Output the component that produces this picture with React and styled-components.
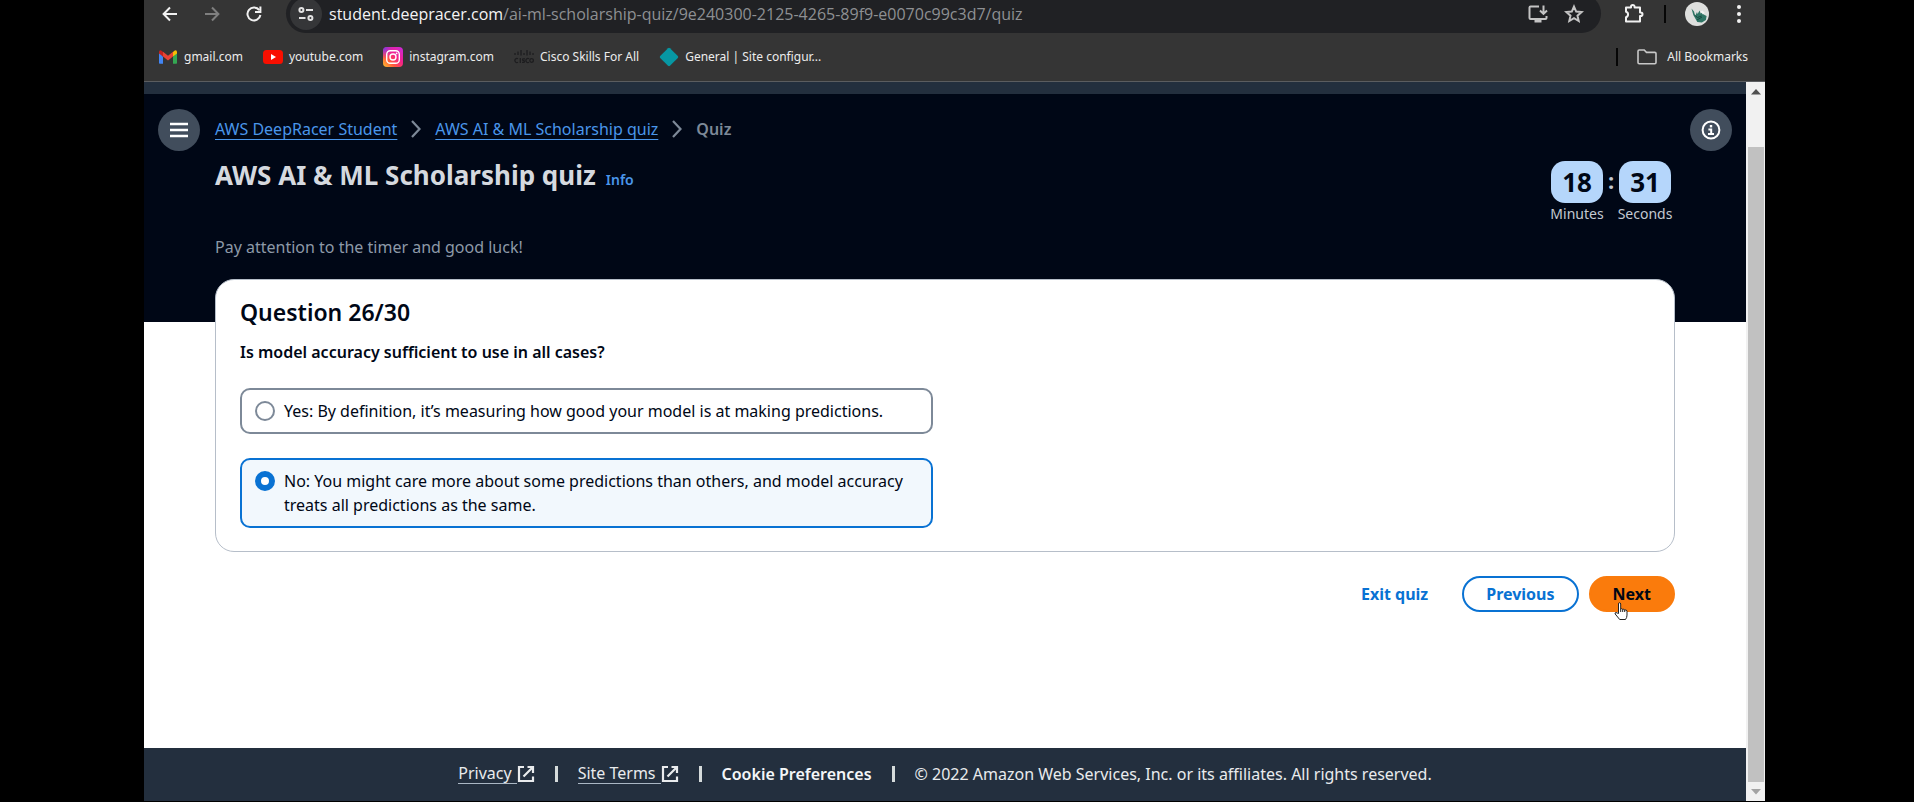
import React from "react";
import styled, { createGlobalStyle } from "styled-components";

const Global = createGlobalStyle`
  *, *::before, *::after { box-sizing: border-box; }
  body { margin: 0; background: #000; }
  button, input { font: inherit; margin: 0; }
  h1, h2, p { margin: 0; }
`;

const ember = `"Noto Sans", "Open Sans", sans-serif`;
const segoe = `"Open Sans", "Noto Sans", sans-serif`;

const Stage = styled.div`
  min-height: 100vh;
  display: flex;
  padding: 0 149px 1px 144px;
  background: #000;
`;

const BrowserWindow = styled.div`
  flex: 1;
  min-width: 0;
  display: flex;
  flex-direction: column;
  background: #353535;
`;

/* ---------- browser toolbar ---------- */

const Toolbar = styled.div`
  height: 33px;
  overflow: hidden;
  display: flex;
  flex-direction: column;
  justify-content: flex-end;
  font-family: ${segoe};
`;

const ToolbarRow = styled.div`
  flex: none;
  height: 39px;
  display: flex;
  align-items: center;
  padding: 0 8px 0 5px;
`;

const ToolButton = styled.button`
  flex: none;
  width: ${(p) => p.$width || 36}px;
  height: 36px;
  padding: 0;
  border: 0;
  background: none;
  color: ${(p) => p.$color || "#f1f1f1"};
  display: flex;
  align-items: center;
  justify-content: center;
`;

const AddressBar = styled.div`
  flex: 1;
  min-width: 0;
  height: 39px;
  margin: 0 15px 0 11px;
  padding: 0 9px 0 4px;
  border-radius: 20px;
  background: #202124;
  display: flex;
  align-items: center;
`;

const SiteChip = styled.button`
  flex: none;
  width: 32px;
  height: 32px;
  padding: 0;
  border: 0;
  border-radius: 50%;
  background: #353638;
  color: #e3e3e3;
  display: flex;
  align-items: center;
  justify-content: center;
`;

const Url = styled.div`
  flex: 1;
  min-width: 0;
  margin-left: 7px;
  overflow: hidden;
  white-space: nowrap;
  font-size: 16px;
  line-height: 24px;
  color: #8e9093;
`;

const Host = styled.span`
  color: #f4f4f4;
`;

const BarDivider = styled.span`
  flex: none;
  width: 2px;
  height: 18px;
  background: #060606;
  margin: ${(p) => (p.$roomy ? "0 19px" : "0 19px 0 12px")};
`;

const Avatar = styled.span`
  flex: none;
  width: 24px;
  height: 24px;
  margin-right: 12px;
  display: flex;
`;

const BookmarksBar = styled.nav`
  height: 49px;
  border-bottom: 1px solid #5b5d60;
  display: flex;
  align-items: center;
  gap: 20px;
  padding: 0 17px 0 14px;
  font-family: ${ember};
`;

const Bookmark = styled.a`
  display: flex;
  align-items: center;
  gap: ${(p) => (p.$folder ? 10 : 6)}px;
  color: #ececec;
  font-size: 12px;
  line-height: 20px;
  white-space: nowrap;
  text-decoration: none;
`;

const BookmarkIcon = styled.span`
  width: 20px;
  height: 20px;
  display: flex;
  align-items: center;
  justify-content: center;
`;

const BookmarksEnd = styled.div`
  margin-left: auto;
  display: flex;
  align-items: center;
`;

/* ---------- viewport ---------- */

const Viewport = styled.div`
  flex: 1;
  display: flex;
`;

const Page = styled.div`
  flex: 1;
  min-width: 0;
  display: flex;
  flex-direction: column;
  border-top: 12px solid #232f3e;
  background: #fff;
  color: #000716;
  font-family: ${ember};
  font-size: 16px;
  line-height: 24px;
`;

const Header = styled.header`
  background: #000716;
  display: grid;
  grid-template-columns: 42px minmax(0, 1fr) 42px;
  column-gap: 15px;
  align-items: start;
  padding: 15px 14px 63px;
`;

const RoundButton = styled.button`
  width: 42px;
  height: 42px;
  padding: 0;
  border: 0;
  border-radius: 50%;
  background: #414d5c;
  color: #fff;
  display: flex;
  align-items: center;
  justify-content: center;
`;

const Breadcrumbs = styled.nav`
  height: 42px;
  padding-bottom: 2px;
  display: flex;
  align-items: center;
  gap: 14px;
  color: #7d8998;
  white-space: nowrap;
`;

const Crumb = styled.a`
  color: #4a96ea;
  text-decoration: underline;
  text-decoration-thickness: 1px;
  text-underline-offset: 4px;
`;

const Current = styled.span`
  font-weight: 600;
`;

const TitleRow = styled.div`
  display: flex;
  justify-content: space-between;
  align-items: flex-start;
  height: 84px;
  padding-right: 4px;
`;

const TitleGroup = styled.div`
  display: flex;
  align-items: baseline;
  gap: 10px;
  white-space: nowrap;
`;

const Title = styled.h1`
  font-size: 26px;
  line-height: 48px;
  font-weight: 700;
  color: #d5d9df;
`;

const InfoLink = styled.a`
  color: #4a96ea;
  font-size: 14px;
  font-weight: 600;
  text-decoration: none;
`;

const Timer = styled.div`
  display: flex;
  gap: 6px;
  padding-top: 10px;
  color: #c3c9d1;
`;

const TimeUnit = styled.div`
  display: flex;
  flex-direction: column;
  align-items: center;
  width: 52px;
  font-size: 14px;
  line-height: 22px;
`;

const TimeValue = styled.span`
  width: 52px;
  height: 42px;
  border-radius: 14px;
  background: #b5d6fb;
  color: #000716;
  font-size: 26px;
  line-height: 42px;
  font-weight: 700;
  text-align: center;
`;

const Colon = styled.span`
  width: 4px;
  display: flex;
  justify-content: center;
  font-size: 22px;
  font-weight: 700;
  line-height: 38px;
`;

const Intro = styled.p`
  color: #8d99a8;
`;

const Main = styled.main`
  flex: 1;
  margin-top: -43px;
  padding: 0 71px;
`;

const Card = styled.section`
  border: 1px solid #b6bec9;
  border-radius: 19px;
  background: #fff;
  padding: 18px 24px 23px;
`;

const QuestionNumber = styled.h2`
  font-size: 23px;
  line-height: 28px;
  font-weight: 600;
`;

const Choices = styled.fieldset`
  min-width: 0;
  margin: 0;
  padding: 0;
  border: 0;
  display: flex;
  flex-direction: column;
  gap: 24px;
  width: calc(50% - 12px);
`;

const QuestionText = styled.legend`
  padding: 14px 0 24px;
  font-weight: 600;
  white-space: nowrap;
`;

const Choice = styled.label`
  display: flex;
  align-items: flex-start;
  gap: 9px;
  padding: 9px 13px;
  border: 2px solid ${(p) => (p.$selected ? "#0972d3" : "#7d8998")};
  border-radius: 10px;
  background: ${(p) => (p.$selected ? "#f2f8fd" : "#fff")};
`;

const Radio = styled.input`
  appearance: none;
  flex: none;
  width: 20px;
  height: 20px;
  margin: 2px 0;
  border: 2px solid #7d8998;
  border-radius: 50%;
  background: #fff;
  &:checked {
    border: 6px solid #0972d3;
  }
`;

const Actions = styled.div`
  display: flex;
  justify-content: flex-end;
  gap: 10px;
  padding: 24px 0;
`;

const ActionButton = styled.button`
  position: relative;
  height: 36px;
  padding: 0 22px;
  border: 2px solid ${(p) => p.$border || "transparent"};
  border-radius: 18px;
  background: ${(p) => p.$fill || "transparent"};
  color: ${(p) => (p.$fill ? "#000716" : "#0972d3")};
  font-weight: 700;
  line-height: 32px;
`;

const Pointer = styled.svg`
  position: absolute;
  left: 23px;
  top: 24px;
  width: 15px;
  height: 19px;
`;

const Footer = styled.footer`
  height: 53px;
  padding-bottom: 2px;
  background: #232f3e;
  color: #e9ebed;
  display: flex;
  align-items: center;
  justify-content: center;
  gap: 20px;
  white-space: nowrap;
`;

const FooterLink = styled.a`
  display: flex;
  align-items: center;
  color: inherit;
  text-decoration: none;
`;

const FooterLabel = styled.span`
  padding-right: 5px;
  line-height: 20px;
  border-bottom: 1px solid #aab7c4;
`;

const FooterButton = styled.button`
  padding: 0;
  border: 0;
  background: none;
  color: #f4f6f8;
  font-weight: 600;
`;

const Pipe = styled.span`
  width: 3px;
  height: 16px;
  background: #d5dbdb;
`;

const Scrollbar = styled.div`
  flex: none;
  width: 19px;
  background: #f1f1f1;
  display: flex;
  flex-direction: column;
  padding: 0 1px 0 2px;
`;

const ScrollButton = styled.span`
  flex: none;
  height: 19px;
  display: flex;
  align-items: center;
  justify-content: center;
`;

const Thumb = styled.span`
  flex: 1;
  margin-top: 46px;
  background: #c1c1c1;
`;

/* ---------- drawings ---------- */

const Arrow = ({ back }) => (
  <svg width="16" height="16" viewBox="0 0 16 16" fill="none" stroke="currentColor" strokeWidth="2">
    <path d={back ? "M15 8H2M8 1.5 1.6 8 8 14.5" : "M1 8h13M8 1.5 14.4 8 8 14.5"} />
  </svg>
);

const Reload = () => (
  <svg width="16" height="16" viewBox="0 0 16 16" fill="none" stroke="currentColor" strokeWidth="2">
    <path d="M13.3 4.2A6.5 6.5 0 1 0 14.4 9" />
    <path d="M14.4 .6V6H9" />
  </svg>
);

const SiteInfo = () => (
  <svg width="16" height="14" viewBox="0 0 16 14" fill="none" stroke="currentColor" strokeWidth="2">
    <circle cx="3.4" cy="3" r="2" />
    <path d="M8 3h7M1 11h6.5" />
    <circle cx="12.4" cy="11" r="2" />
  </svg>
);

const Install = () => (
  <svg width="20" height="20" viewBox="0 0 20 20" fill="none" stroke="#c4c4c4" strokeWidth="2">
    <path d="M11 2.5H2.6Q1.5 2.5 1.5 3.6v10.3Q1.5 15 2.6 15h14.8q1.1 0 1.1-1.1V12" />
    <path d="M6.5 17h7" strokeWidth="3" />
    <path d="M15.5 1.5v8M12 6.5l3.5 3.4L19 6.5" />
  </svg>
);

const Star = () => (
  <svg width="20" height="20" viewBox="0 0 20 20" fill="none" stroke="#c4c4c4" strokeWidth="2">
    <path d="M10 2.6l2.2 5 5.4.5-4.1 3.6 1.2 5.3-4.7-2.8-4.7 2.8 1.2-5.3L2.4 8.1l5.4-.5z" />
  </svg>
);

const Puzzle = () => (
  <svg width="20" height="20" viewBox="0 0 20 20" fill="none" stroke="currentColor" strokeWidth="2">
    <path d="M2 3.5h5V2.800a1.800 1.800 0 0 1 3.600 0v.7H16V8.500h.7a1.800 1.800 0 0 1 0 3.600H16V17.500H2v-4.300a2.800 2.800 0 0 0 0-5.400z" strokeLinejoin="round" />
  </svg>
);

const ProfileArt = () => (
  <svg width="24" height="24" viewBox="0 0 24 24">
    <circle cx="12" cy="12" r="12" fill="#dedfdd" />
    <path d="M6.500 6.500 9 9.500l1.200 4.500L12 10l.6 2 2-3.500 1 3 2-1 1 2 3 1.400-.7 4.100-4 2.600-4.600-.6-2-3.400-2-3.600z" fill="#2f7565" />
    <path d="M15.500 9.500l2-1 2.400 2.600-2 1.400z" fill="#f2f4f2" />
    <path d="M9.500 13l3 2.500 4-1.500M12 18l5-3" stroke="#17493f" fill="none" />
  </svg>
);

const Dots = () => (
  <svg width="6" height="20" viewBox="0 0 6 20" fill="currentColor">
    <circle cx="3" cy="3" r="2" />
    <circle cx="3" cy="10" r="2" />
    <circle cx="3" cy="17" r="2" />
  </svg>
);

const Gmail = () => (
  <svg width="18" height="14" viewBox="0 0 18 14">
    <path d="M0 2.2V13q0 .7.8.7H4V6.400z" fill="#4285f4" />
    <path d="M18 2.200V13q0 .7-.8.7H14V6.400z" fill="#34a853" />
    <path d="M0 2V3.400l4 3.200V2L2.600.7Q.2-.4 0 2z" fill="#c5221f" />
    <path d="M14 2v4.600l4-3.200V2q-.2-2.400-2.600-1.300z" fill="#fbbc04" />
    <path d="M4 1.800l5 3.900 5-3.900v4.700l-5 3.900-5-3.900z" fill="#ea4335" />
  </svg>
);

const YouTube = () => (
  <svg width="20" height="14" viewBox="0 0 20 14">
    <rect width="20" height="14" rx="3.500" fill="#f90f00" />
    <path d="M8 4l5 3-5 3z" fill="#fff" />
  </svg>
);

const Instagram = () => (
  <svg width="20" height="20" viewBox="0 0 20 20" fill="none">
    <defs>
      <linearGradient id="ig" x1="0" y1="1" x2="1" y2="0">
        <stop offset="0" stopColor="#ffc62e" />
        <stop offset=".3" stopColor="#ff5a3c" />
        <stop offset=".6" stopColor="#f31f8d" />
        <stop offset="1" stopColor="#c62be0" />
      </linearGradient>
      <radialGradient id="igc" cx="0" cy="0" r=".6">
        <stop offset="0" stopColor="#5a3cf5" />
        <stop offset="1" stopColor="#c62be0" stopOpacity="0" />
      </radialGradient>
    </defs>
    <rect width="20" height="20" rx="4" fill="url(#ig)" />
    <rect width="20" height="20" rx="4" fill="url(#igc)" />
    <rect x="3.700" y="3.700" width="12.600" height="12.600" rx="3.600" stroke="#fff" strokeWidth="1.400" />
    <circle cx="10" cy="10" r="3" stroke="#fff" strokeWidth="1.400" />
    <circle cx="13.600" cy="6.400" r=".9" fill="#fff" />
  </svg>
);

const Cisco = () => (
  <svg width="20" height="14" viewBox="0 0 20 14" fill="none" stroke="#1d1d1f" strokeWidth="1.300">
    <path d="M1 3v2M4 1.500V5M7 0v5.500M10 3v2M13 0v5.500M16 1.500V5M19 3v2" />
    <path d="M4 8.800a2 2 0 1 0 0 3.400M6.300 8v5M11 8.800H9q-1 .9 0 1.500l1 .4q1 .8 0 1.600H8M15 8.800a2 2 0 1 0 0 3.400" />
    <circle cx="17.600" cy="10.500" r="1.800" />
  </svg>
);

const Diamond = () => (
  <svg width="20" height="20" viewBox="0 0 20 20">
    <path d="M9 1.200q1-.9 2 0L18.800 9q.9 1 0 2L11 18.800q-1 .9-2 0L1.200 11q-.9-1 0-2z" fill="#0797a3" />
  </svg>
);

const Folder = () => (
  <svg width="20" height="16" viewBox="0 0 20 16" fill="none" stroke="#c8c8c8" strokeWidth="1.600">
    <path d="M1 13.600V2.200Q1 1 2.200 1h5l2.300 2.400h8.300q1.200 0 1.200 1.200v9q0 1.200-1.200 1.200H2.200Q1 14.800 1 13.600z" />
  </svg>
);

const Burger = () => (
  <svg width="18" height="16" viewBox="0 0 18 16" stroke="currentColor" strokeWidth="2.400">
    <path d="M0 2h18M0 8h18M0 14h18" />
  </svg>
);

const InfoIcon = () => (
  <svg width="20" height="20" viewBox="0 0 20 20" fill="none" stroke="currentColor" strokeWidth="2">
    <circle cx="10" cy="10" r="8.400" />
    <path d="M8.800 6.200h2.400" strokeWidth="2.400" />
    <path d="M7.400 9.500h2.800V14M7 14h6" />
  </svg>
);

const Chevron = () => (
  <svg width="10" height="18" viewBox="0 0 10 18" fill="none" stroke="#7d8998" strokeWidth="2.200">
    <path d="M1 1l7.500 8L1 17" />
  </svg>
);

const External = () => (
  <svg width="18" height="18" viewBox="0 0 18 18" fill="none" stroke="currentColor" strokeWidth="2.200">
    <path d="M7 2H2v14h14v-4.500M10.500 2H16v6M16 2 6.500 11.500" />
  </svg>
);

const Triangle = ({ down }) => (
  <svg width="10" height="6" viewBox="0 0 10 6" fill={down ? "#a3a3a3" : "#505050"}>
    <path d={down ? "M0 0h10L5 5.500z" : "M0 5.500h10L5 0z"} />
  </svg>
);

const bookmarks = [
  ["gmail.com", Gmail],
  ["youtube.com", YouTube],
  ["instagram.com", Instagram],
  ["Cisco Skills For All", Cisco],
  ["General | Site configur...", Diamond],
];

const choices = [
  ["yes", "Yes: By definition, it’s measuring how good your model is at making predictions."],
  ["no", "No: You might care more about some predictions than others, and model accuracy treats all predictions as the same."],
];

export default function App() {
  const [answer, setAnswer] = React.useState("no");

  return (
    <Stage>
      <Global />
      <BrowserWindow>
        <Toolbar>
          <ToolbarRow>
            <ToolButton $width={42} aria-label="Back"><Arrow back /></ToolButton>
            <ToolButton $width={42} $color="#7f7f7f" aria-label="Forward"><Arrow /></ToolButton>
            <ToolButton $width={42} aria-label="Reload"><Reload /></ToolButton>
            <AddressBar>
              <SiteChip aria-label="Site information"><SiteInfo /></SiteChip>
              <Url><Host>student.deepracer.com</Host>/ai-ml-scholarship-quiz/9e240300-2125-4265-89f9-e0070c99c3d7/quiz</Url>
              <ToolButton aria-label="Install"><Install /></ToolButton>
              <ToolButton aria-label="Bookmark this page"><Star /></ToolButton>
            </AddressBar>
            <ToolButton aria-label="Extensions"><Puzzle /></ToolButton>
            <BarDivider />
            <Avatar><ProfileArt /></Avatar>
            <ToolButton aria-label="Menu"><Dots /></ToolButton>
          </ToolbarRow>
        </Toolbar>
        <BookmarksBar>
          {bookmarks.map(([name, Icon]) => (
            <Bookmark href="#" key={name}>
              <BookmarkIcon><Icon /></BookmarkIcon>
              {name}
            </Bookmark>
          ))}
          <BookmarksEnd>
            <BarDivider $roomy />
            <Bookmark href="#" $folder>
              <BookmarkIcon><Folder /></BookmarkIcon>
              All Bookmarks
            </Bookmark>
          </BookmarksEnd>
        </BookmarksBar>

        <Viewport>
          <Page>
            <Header>
              <RoundButton aria-label="Open navigation"><Burger /></RoundButton>
              <div>
                <Breadcrumbs>
                  <Crumb href="#">AWS DeepRacer Student</Crumb>
                  <Chevron />
                  <Crumb href="#">AWS AI &amp; ML Scholarship quiz</Crumb>
                  <Chevron />
                  <Current>Quiz</Current>
                </Breadcrumbs>
                <TitleRow>
                  <TitleGroup>
                    <Title>AWS AI &amp; ML Scholarship quiz</Title>
                    <InfoLink href="#">Info</InfoLink>
                  </TitleGroup>
                  <Timer>
                    <TimeUnit><TimeValue>18</TimeValue>Minutes</TimeUnit>
                    <Colon>:</Colon>
                    <TimeUnit><TimeValue>31</TimeValue>Seconds</TimeUnit>
                  </Timer>
                </TitleRow>
                <Intro>Pay attention to the timer and good luck!</Intro>
              </div>
              <RoundButton aria-label="Open help"><InfoIcon /></RoundButton>
            </Header>

            <Main>
              <Card>
                <QuestionNumber>Question 26/30</QuestionNumber>
                <Choices>
                  <QuestionText>Is model accuracy sufficient to use in all cases?</QuestionText>
                  {choices.map(([id, text]) => (
                    <Choice key={id} $selected={answer === id}>
                      <Radio
                        type="radio"
                        name="answer"
                        checked={answer === id}
                        onChange={() => setAnswer(id)}
                      />
                      <span>{text}</span>
                    </Choice>
                  ))}
                </Choices>
              </Card>
              <Actions>
                <ActionButton>Exit quiz</ActionButton>
                <ActionButton $border="#0972d3">Previous</ActionButton>
                <ActionButton $border="#fa7b0c" $fill="#fa7b0c">
                  Next
                  <Pointer viewBox="0 0 15 19" fill="#fff" stroke="#222" strokeWidth="1">
                    <path d="M4.500 11.500V2q0-1.300 1-1.300T6.700 2v5q1.200-.8 2 .4 1.300-.6 2 .5 2-.4 2.300 1.200v4q0 2.500-1.500 4.400H5.700L1.200 12q-.6-1.400.8-1.500z" />
                    <path d="M6.700 7v3M8.700 7.500v2.500M10.700 8v2" />
                  </Pointer>
                </ActionButton>
              </Actions>
            </Main>

            <Footer>
              <FooterLink href="#"><FooterLabel>Privacy</FooterLabel><External /></FooterLink>
              <Pipe />
              <FooterLink href="#"><FooterLabel>Site Terms</FooterLabel><External /></FooterLink>
              <Pipe />
              <FooterButton>Cookie Preferences</FooterButton>
              <Pipe />
              <span>© 2022 Amazon Web Services, Inc. or its affiliates. All rights reserved.</span>
            </Footer>
          </Page>
          <Scrollbar>
            <ScrollButton><Triangle /></ScrollButton>
            <Thumb />
            <ScrollButton><Triangle down /></ScrollButton>
          </Scrollbar>
        </Viewport>
      </BrowserWindow>
    </Stage>
  );
}
